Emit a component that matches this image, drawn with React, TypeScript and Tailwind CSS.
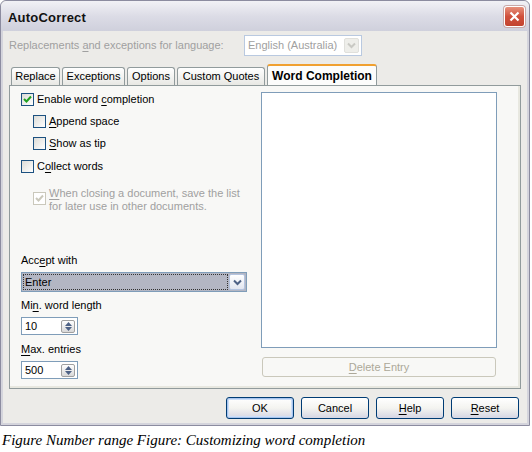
import { ReactNode } from 'react'

function CheckBox({ checked, disabled }: { checked?: boolean; disabled?: boolean }) {
  return (
    <span
      className={`flex size-[13px] shrink-0 items-center justify-center border ${
        disabled
          ? 'border-[#cac8bb] bg-white'
          : 'border-[#1c5180] bg-gradient-to-br from-[#dcdcd7] to-white'
      }`}
    >
      {checked && (
        <svg width="9" height="9" viewBox="0 0 9 9">
          <path
            d="M1 4 L3.5 6.5 L8 1.5"
            fill="none"
            stroke={disabled ? '#cac8bb' : '#21a121'}
            strokeWidth="2"
          />
        </svg>
      )}
    </span>
  )
}

function U({ children }: { children: ReactNode }) {
  return <span className="underline underline-offset-[2px]">{children}</span>
}

function SpinBox({ value }: { value: string }) {
  return (
    <div className="flex h-[18px] w-[57px] items-center justify-between border border-[#7f9db9] bg-white pr-[2px] pl-[3px]">
      <span>{value}</span>
      <span className="flex h-[13px] w-[14px] flex-col items-center justify-center gap-[1px] rounded-[2px] border border-[#a0a0a0] bg-gradient-to-b from-white to-[#d8d8d8]">
        <svg width="7" height="4" viewBox="0 0 7 4">
          <path d="M0 4 L3.5 0 L7 4 Z" fill="#4d6185" />
        </svg>
        <svg width="7" height="4" viewBox="0 0 7 4">
          <path d="M0 0 L3.5 4 L7 0 Z" fill="#4d6185" />
        </svg>
      </span>
    </div>
  )
}

function Chevron({ color }: { color: string }) {
  return (
    <svg width="9" height="7" viewBox="0 0 9 7">
      <path d="M1 1.5 L4.5 5 L8 1.5" fill="none" stroke={color} strokeWidth="2" />
    </svg>
  )
}

function DialogButton({ label, focused }: { label: ReactNode; focused?: boolean }) {
  return (
    <button
      className={`flex h-[22px] w-[68px] items-center justify-center rounded-[3px] border border-[#003c74] bg-gradient-to-b from-white via-[#f4f4f0] to-[#d6d6e4] ${
        focused ? 'shadow-[inset_0_0_0_1px_#a8c4ee,inset_0_0_0_2px_#cee0f8]' : ''
      }`}
    >
      {label}
    </button>
  )
}

export default function App() {
  const tabs = [
    { label: 'Replace', w: 'w-[49px]' },
    { label: 'Exceptions', w: 'w-[63px]' },
    { label: 'Options', w: 'w-[48px]' },
    { label: 'Custom Quotes', w: 'w-[88px]' },
  ]

  return (
    <div className="h-[452px] w-[532px] bg-white font-['Liberation_Sans',Arial,sans-serif] text-[11px] text-black">
      <div className="flex h-[426px] w-[530px] flex-col rounded-t-[6px] border border-[#8c8ca0] bg-[#ecebe8]">
        {/* title bar */}
        <div className="flex h-[30px] items-center justify-between rounded-t-[6px] bg-gradient-to-b from-[#f2f2f6] via-[#dcdce6] to-[#cfd0dc] pr-[4px] pl-[7px]">
          <span className="pt-[3px] text-[13px] font-bold tracking-[0.2px] text-[#111]">AutoCorrect</span>
          <span className="flex size-[21px] items-center justify-center rounded-[3px] border border-white bg-gradient-to-b from-[#e6907c] via-[#d0503c] to-[#c24430] shadow-[0_0_0_1px_#c8a8a8]">
            <svg width="11" height="11" viewBox="0 0 11 11">
              <path d="M1.5 1.5 L9.5 9.5 M9.5 1.5 L1.5 9.5" stroke="white" strokeWidth="2.2" />
            </svg>
          </span>
        </div>

        <div className="flex flex-1 flex-col border-x-2 border-b-2 border-[#d4d4dc] px-[6px]">
          {/* language row */}
          <div className="mt-[4px] flex h-[21px] items-center">
            <span className="w-[235px] text-[#a0a0a0]">
              Replacements <U>a</U>nd exceptions for language:
            </span>
            <div className="flex h-[21px] w-[118px] items-center justify-between border border-[#b9c9e0] bg-white pr-[2px] pl-[3px] text-[#a0a0a0]">
              <span>English (Australia)</span>
              <span className="flex h-[15px] w-[15px] items-center justify-center rounded-[2px] border border-[#e0e0dc] bg-[#eeeeea]">
                <Chevron color="#c9c9c4" />
              </span>
            </div>
          </div>

          {/* tabs */}
          <div className="mt-[8px] flex h-[21px] items-end gap-[2px] pl-[2px]">
            {tabs.map((tab) => (
              <div
                key={tab.label}
                className={`flex h-[18px] ${tab.w} items-center justify-center rounded-t-[3px] border border-b-0 border-[#919b9c] bg-gradient-to-b from-white to-[#e8e8e4]`}
              >
                {tab.label}
              </div>
            ))}
            <div className="-mb-[1px] flex h-[22px] w-[110px] items-center justify-center rounded-t-[3px] border-x border-t-2 border-x-[#919b9c] border-t-[#f0a030] bg-[#fcfcfb] text-[12px] font-bold">
              Word Completion
            </div>
          </div>

          {/* tab pane */}
          <div className="flex h-[304px] border border-[#919b9c] bg-[#f8f8f6] shadow-[inset_-2px_-2px_0_#e8e8e0]">
            <div className="flex w-[251px] flex-col pl-[11px]">
              <label className="mt-[6px] flex h-[14px] items-center gap-[3px]">
                <CheckBox checked />
                <span>
                  Enable word <U>c</U>ompletion
                </span>
              </label>
              <label className="mt-[8px] ml-[12px] flex h-[14px] items-center gap-[3px]">
                <CheckBox />
                <span>
                  <U>A</U>ppend space
                </span>
              </label>
              <label className="mt-[8px] ml-[12px] flex h-[14px] items-center gap-[3px]">
                <CheckBox />
                <span>
                  <U>S</U>how as tip
                </span>
              </label>
              <label className="mt-[9px] flex h-[14px] items-center gap-[3px]">
                <CheckBox />
                <span>
                  C<U>o</U>llect words
                </span>
              </label>
              <label className="mt-[14px] ml-[12px] flex items-start gap-[3px] text-[#a0a0a0]">
                <span className="mt-[5px]">
                  <CheckBox checked disabled />
                </span>
                <span className="leading-[13px]">
                  <U>W</U>hen closing a document, save the list
                  <br />
                  for later use in other documents.
                </span>
              </label>

              <span className="mt-[40px] leading-[14px]">
                Acc<U>e</U>pt with
              </span>
              <div className="mt-[5px] flex h-[20px] w-[226px] items-center justify-between border border-[#7f9db9] bg-[#b3b6c3] p-[1px]">
                <span className="flex h-full flex-1 items-center border border-dotted border-[#333] pl-[1px]">
                  Enter
                </span>
                <span className="ml-[1px] flex h-[16px] w-[16px] items-center justify-center rounded-[2px] border border-[#b4c4e0] bg-gradient-to-b from-white to-[#e2e6f0]">
                  <Chevron color="#4d6185" />
                </span>
              </div>
              <span className="mt-[6px] leading-[14px]">
                Mi<U>n</U>. word length
              </span>
              <div className="mt-[5px]">
                <SpinBox value="10" />
              </div>
              <span className="mt-[7px] leading-[14px]">
                <U>M</U>ax. entries
              </span>
              <div className="mt-[5px]">
                <SpinBox value="500" />
              </div>
            </div>

            <div className="flex w-[236px] flex-col pt-[6px]">
              <div className="h-[256px] border border-[#7f9db9] bg-white" />
              <div className="mt-[9px] ml-[1px] flex h-[20px] w-[234px] items-center justify-center rounded-[3px] border border-[#cac8bb] text-[#aca899]">
                <span>
                  <U>D</U>elete Entry
                </span>
              </div>
            </div>
          </div>

          {/* buttons */}
          <div className="mt-[8px] flex justify-end gap-[7px] pr-[2px]">
            <DialogButton label="OK" focused />
            <DialogButton label="Cancel" />
            <DialogButton
              label={
                <span>
                  <U>H</U>elp
                </span>
              }
            />
            <DialogButton
              label={
                <span>
                  <U>R</U>eset
                </span>
              }
            />
          </div>
        </div>
      </div>
      <p className="mt-[3px] pl-[2px] font-['Liberation_Serif',serif] text-[15px] italic">
        Figure Number range Figure: Customizing word completion
      </p>
    </div>
  )
}
